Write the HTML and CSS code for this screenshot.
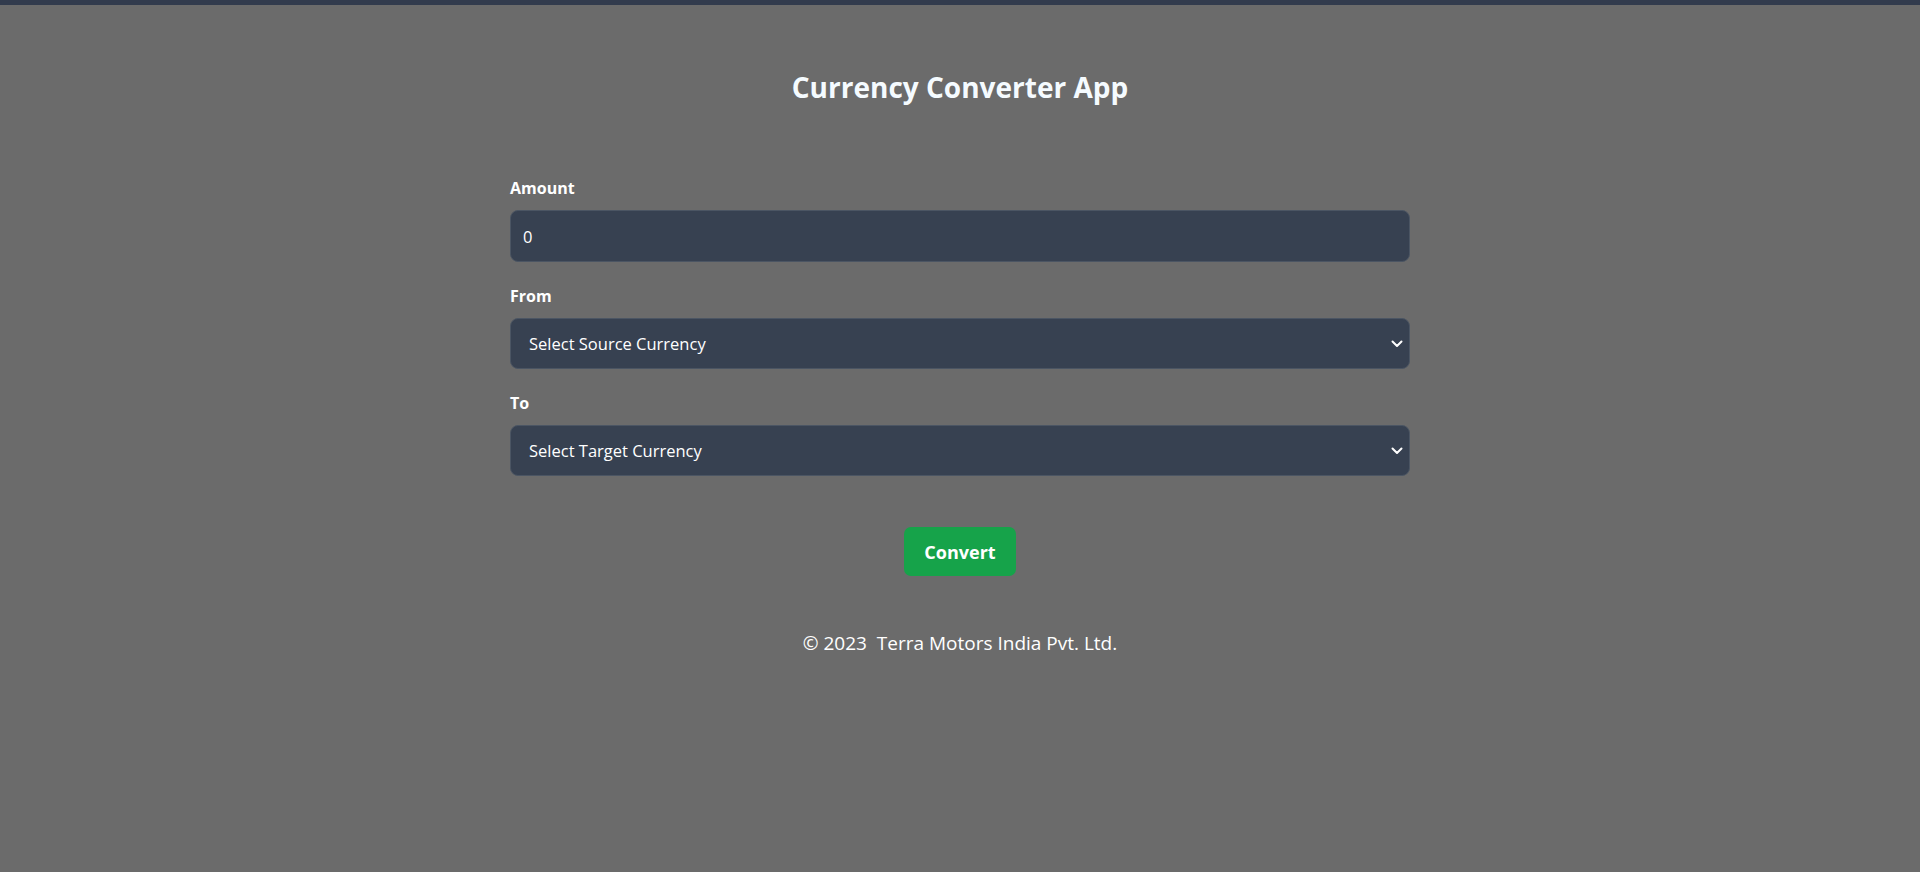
FILE: index.html
```html
<!DOCTYPE html>
<html lang="en">
<head>
<meta charset="utf-8">
<title>Currency Converter App</title>
<link rel="stylesheet" href="styles.css">
</head>
<body>
<div class="page">
  <h1 class="title">Currency Converter App</h1>
  <form class="form">
    <div class="field">
      <label class="label" for="amount">Amount</label>
      <input class="control input" id="amount" type="number" value="0">
    </div>
    <div class="field">
      <label class="label" for="from">From</label>
      <div class="select-wrap">
        <select class="control select" id="from">
          <option>Select Source Currency</option>
        </select>
        <svg class="chevron" width="12" height="8" viewBox="0 0 12 8"><path d="M1.5 1.5 L6 6 L10.5 1.5" fill="none" stroke="#fff" stroke-width="2" stroke-linecap="round" stroke-linejoin="round"/></svg>
      </div>
    </div>
    <div class="field">
      <label class="label" for="to">To</label>
      <div class="select-wrap">
        <select class="control select" id="to">
          <option>Select Target Currency</option>
        </select>
        <svg class="chevron" width="12" height="8" viewBox="0 0 12 8"><path d="M1.5 1.5 L6 6 L10.5 1.5" fill="none" stroke="#fff" stroke-width="2" stroke-linecap="round" stroke-linejoin="round"/></svg>
      </div>
    </div>
    <div class="actions">
      <button class="button" type="button">Convert</button>
    </div>
  </form>
  <footer class="footer">© 2023&nbsp; Terra Motors India Pvt. Ltd.</footer>
</div>
</body>
</html>
```

FILE: styles.css
```css
html, body {
  margin: 0;
  padding: 0;
}
body {
  background: #6b6b6b;
  font-family: "Open Sans", "Noto Sans", sans-serif;
  color: #ffffff;
  min-height: 100vh;
  border-top: 5px solid #323b4d;
  box-sizing: border-box;
}
.page {
  display: flex;
  flex-direction: column;
  align-items: center;
  padding-top: 64px;
}
.title {
  margin: 0;
  font-size: 28px;
  line-height: 36px;
  font-weight: 700;
  color: #f5fbff;
}
.form {
  width: 900px;
  margin-top: 71px;
  display: flex;
  flex-direction: column;
  gap: 22px;
}
.field {
  display: flex;
  flex-direction: column;
}
.label {
  font-size: 16px;
  line-height: 24px;
  font-weight: 700;
  margin-bottom: 10px;
}
.control {
  box-sizing: border-box;
  width: 100%;
  height: 52px;
  background: #374151;
  border: 1px solid #4b5563;
  border-radius: 8px;
  color: #ffffff;
  font-family: inherit;
  font-size: 16.5px;
  outline: none;
}
.input {
  padding: 0 12px;
  -moz-appearance: textfield;
}
.input::-webkit-outer-spin-button,
.input::-webkit-inner-spin-button {
  -webkit-appearance: none;
  margin: 0;
}
.select-wrap {
  position: relative;
}
.select {
  height: 51px;
  appearance: none;
  -webkit-appearance: none;
  padding: 0 40px 0 18px;
}
.chevron {
  position: absolute;
  right: 7px;
  top: 22px;
  pointer-events: none;
}
.actions {
  display: flex;
  justify-content: center;
  margin-top: 29px;
}
.button {
  width: 112px;
  height: 49px;
  background: #16a34a;
  border: none;
  border-radius: 7px;
  color: #ffffff;
  font-family: inherit;
  font-size: 18px;
  font-weight: 700;
}
.footer {
  margin-top: 53px;
  font-size: 19px;
  line-height: 28px;
}
```
